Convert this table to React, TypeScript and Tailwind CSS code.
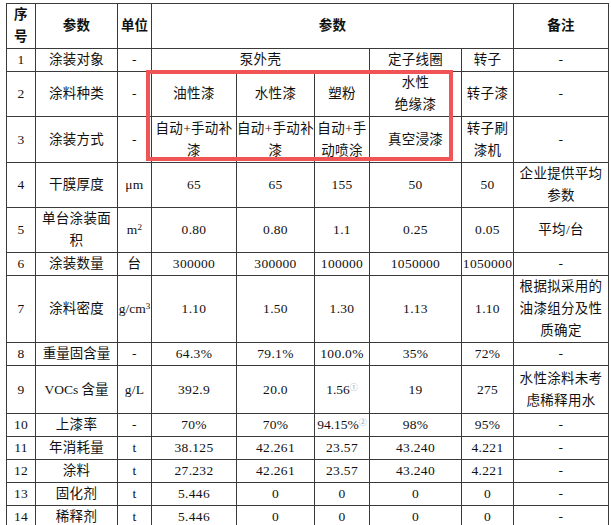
import React from "react";

type Cell = { t: React.ReactNode; span?: number; b?: boolean; nw?: boolean };

const Sup1 = () => <sup className="text-[8px] text-gray-400">①</sup>;
const Sup2 = () => <sup className="text-[8px] text-gray-400">②</sup>;

const rows: { h: number; cells: Cell[] }[] = [
  {
    h: 45,
    cells: [
      { t: <>序<br />号</>, b: true },
      { t: "参数", b: true },
      { t: "单位", b: true, nw: true },
      { t: "参数", b: true, span: 5 },
      { t: "备注", b: true },
    ],
  },
  {
    h: 23,
    cells: [
      { t: "1" },
      { t: "涂装对象" },
      { t: "-" },
      { t: "泵外壳", span: 3 },
      { t: "定子线圈" },
      { t: "转子" },
      { t: "-" },
    ],
  },
  {
    h: 45,
    cells: [
      { t: "2" },
      { t: "涂料种类" },
      { t: "-" },
      { t: "油性漆" },
      { t: "水性漆" },
      { t: "塑粉" },
      { t: <>水性<br />绝缘漆</> },
      { t: "转子漆" },
      { t: "-" },
    ],
  },
  {
    h: 46,
    cells: [
      { t: "3" },
      { t: "涂装方式" },
      { t: "-" },
      { t: <>自动+手动补<br />漆</> },
      { t: <>自动+手动补<br />漆</> },
      { t: <>自动+手<br />动喷涂</> },
      { t: "真空浸漆" },
      { t: <>转子刷<br />漆机</> },
      { t: "-" },
    ],
  },
  {
    h: 44,
    cells: [
      { t: "4" },
      { t: "干膜厚度" },
      { t: "μm" },
      { t: "65" },
      { t: "65" },
      { t: "155" },
      { t: "50" },
      { t: "50" },
      { t: <>企业提供平均<br />参数</> },
    ],
  },
  {
    h: 45,
    cells: [
      { t: "5" },
      { t: <>单台涂装面<br />积</> },
      { t: <>m<sup className="text-[9px]">2</sup></> },
      { t: "0.80" },
      { t: "0.80" },
      { t: "1.1" },
      { t: "0.25" },
      { t: "0.05" },
      { t: "平均/台" },
    ],
  },
  {
    h: 23,
    cells: [
      { t: "6" },
      { t: "涂装数量" },
      { t: "台" },
      { t: "300000" },
      { t: "300000" },
      { t: "100000" },
      { t: "1050000" },
      { t: "1050000" },
      { t: "-" },
    ],
  },
  {
    h: 67,
    cells: [
      { t: "7" },
      { t: "涂料密度" },
      { t: <>g/cm<sup className="text-[9px]">3</sup></>, nw: true },
      { t: "1.10" },
      { t: "1.50" },
      { t: "1.30" },
      { t: "1.13" },
      { t: "1.10" },
      { t: <>根据拟采用的<br />油漆组分及性<br />质确定</> },
    ],
  },
  {
    h: 21,
    cells: [
      { t: "8" },
      { t: "重量固含量", nw: true },
      { t: "-" },
      { t: "64.3%" },
      { t: "79.1%" },
      { t: "100.0%" },
      { t: "35%" },
      { t: "72%" },
      { t: "-" },
    ],
  },
  {
    h: 48,
    cells: [
      { t: "9" },
      { t: "VOCs 含量", nw: true },
      { t: "g/L" },
      { t: "392.9" },
      { t: "20.0" },
      { t: <>1.56<Sup1 /></>, nw: true },
      { t: "19" },
      { t: "275" },
      { t: <>水性涂料未考<br />虑稀释用水</> },
    ],
  },
  {
    h: 23,
    cells: [
      { t: "10" },
      { t: "上漆率" },
      { t: "-" },
      { t: "70%" },
      { t: "70%" },
      { t: <>94.15%<Sup2 /></>, nw: true },
      { t: "98%" },
      { t: "95%" },
      { t: "-" },
    ],
  },
  {
    h: 22,
    cells: [
      { t: "11" },
      { t: "年消耗量" },
      { t: "t" },
      { t: "38.125" },
      { t: "42.261" },
      { t: "23.57" },
      { t: "43.240" },
      { t: "4.221" },
      { t: "-" },
    ],
  },
  {
    h: 23,
    cells: [
      { t: "12" },
      { t: "涂料" },
      { t: "t" },
      { t: "27.232" },
      { t: "42.261" },
      { t: "23.57" },
      { t: "43.240" },
      { t: "4.221" },
      { t: "-" },
    ],
  },
  {
    h: 23,
    cells: [
      { t: "13" },
      { t: "固化剂" },
      { t: "t" },
      { t: "5.446" },
      { t: "0" },
      { t: "0" },
      { t: "0" },
      { t: "0" },
      { t: "-" },
    ],
  },
  {
    h: 22,
    cells: [
      { t: "14" },
      { t: "稀释剂" },
      { t: "t" },
      { t: "5.446" },
      { t: "0" },
      { t: "0" },
      { t: "0" },
      { t: "0" },
      { t: "-" },
    ],
  },
];

const widths = [29, 82, 34, 85, 78, 55, 92, 52, 95];

export default function App() {
  return (
    <div
      className="relative w-[611px] h-[525px] bg-white pl-[6px] pt-[3px] text-[#111] text-[13.5px] tracking-[0.3px]"
      style={{ fontFamily: '"Liberation Serif", "Noto Sans CJK SC", serif' }}
    >
      <table className="w-[602px] table-fixed border-collapse">
        <colgroup>
          {widths.map((w, i) => (
            <col key={i} style={{ width: w }} />
          ))}
        </colgroup>
        <tbody>
          {rows.map((r, ri) => (
            <tr key={ri} style={{ height: r.h }}>
              {r.cells.map((c, ci) => (
                <td
                  key={ci}
                  colSpan={c.span}
                  className={
                    "border border-[#3a3a3a] p-0 text-center align-middle leading-[22px] " +
                    (c.b ? "font-bold " : "") +
                    (c.nw ? "whitespace-nowrap tracking-normal " : "")
                  }
                >
                  {c.t}
                </td>
              ))}
            </tr>
          ))}
        </tbody>
      </table>
      <div className="absolute left-[146px] top-[70px] w-[307px] h-[91px] border-4 border-[#f05454] pointer-events-none" />
    </div>
  );
}
